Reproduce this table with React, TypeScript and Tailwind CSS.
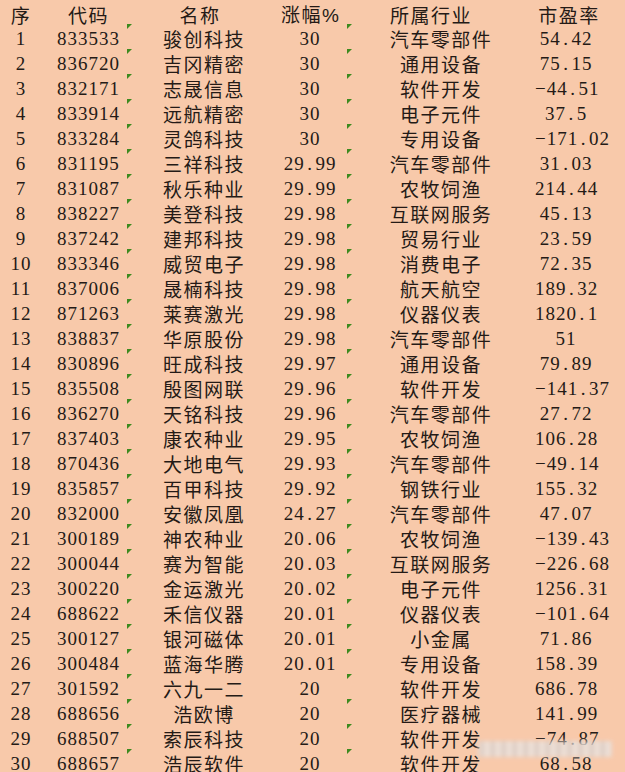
const rows: [string, string, string, string, string, string][] = [
  ['1', '833533', '骏创科技', '30', '汽车零部件', '54.42'],
  ['2', '836720', '吉冈精密', '30', '通用设备', '75.15'],
  ['3', '832171', '志晟信息', '30', '软件开发', '-44.51'],
  ['4', '833914', '远航精密', '30', '电子元件', '37.5'],
  ['5', '833284', '灵鸽科技', '30', '专用设备', '-171.02'],
  ['6', '831195', '三祥科技', '29.99', '汽车零部件', '31.03'],
  ['7', '831087', '秋乐种业', '29.99', '农牧饲渔', '214.44'],
  ['8', '838227', '美登科技', '29.98', '互联网服务', '45.13'],
  ['9', '837242', '建邦科技', '29.98', '贸易行业', '23.59'],
  ['10', '833346', '威贸电子', '29.98', '消费电子', '72.35'],
  ['11', '837006', '晟楠科技', '29.98', '航天航空', '189.32'],
  ['12', '871263', '莱赛激光', '29.98', '仪器仪表', '1820.1'],
  ['13', '838837', '华原股份', '29.98', '汽车零部件', '51'],
  ['14', '830896', '旺成科技', '29.97', '通用设备', '79.89'],
  ['15', '835508', '殷图网联', '29.96', '软件开发', '-141.37'],
  ['16', '836270', '天铭科技', '29.96', '汽车零部件', '27.72'],
  ['17', '837403', '康农种业', '29.95', '农牧饲渔', '106.28'],
  ['18', '870436', '大地电气', '29.93', '汽车零部件', '-49.14'],
  ['19', '835857', '百甲科技', '29.92', '钢铁行业', '155.32'],
  ['20', '832000', '安徽凤凰', '24.27', '汽车零部件', '47.07'],
  ['21', '300189', '神农种业', '20.06', '农牧饲渔', '-139.43'],
  ['22', '300044', '赛为智能', '20.03', '互联网服务', '-226.68'],
  ['23', '300220', '金运激光', '20.02', '电子元件', '1256.31'],
  ['24', '688622', '禾信仪器', '20.01', '仪器仪表', '-101.64'],
  ['25', '300127', '银河磁体', '20.01', '小金属', '71.86'],
  ['26', '300484', '蓝海华腾', '20.01', '专用设备', '158.39'],
  ['27', '301592', '六九一二', '20', '软件开发', '686.78'],
  ['28', '688656', '浩欧博', '20', '医疗器械', '141.99'],
  ['29', '688507', '索辰科技', '20', '软件开发', '-74.87'],
  ['30', '688657', '浩辰软件', '20', '软件开发', '68.58'],
];

const cols = 'grid grid-cols-[42px_93px_138px_74px_188px_90px]';
const num = "font-['Liberation_Serif',serif] text-[19px] tracking-[1px]";
const cjk = "font-['Noto_Sans_CJK_SC',sans-serif] text-[19px] tracking-[1.5px]";

// SimSun-like number: wide dot and wide minus
function Num({ v }: { v: string }) {
  const neg = v.startsWith('-');
  const [a, b] = (neg ? v.slice(1) : v).split('.');
  return (
    <>
      {neg && '\u2212'}
      {a}
      {b !== undefined && <span className="px-[2.5px]">.</span>}
      {b}
    </>
  );
}

function Marker({ left }: { left: string }) {
  return (
    <span
      className={`absolute top-[-1px] ${left} h-0 w-0 border-t-[5px] border-r-[5px] border-t-[#3d8a1e] border-r-transparent`}
    />
  );
}

export default function App() {
  return (
    <div className="relative h-[772px] w-[625px] overflow-hidden bg-[#f8c9aa] text-[#241a16]">
      <div className={`${cols} h-[25px] items-center`}>
        <div className={`${cjk} text-center`}>序</div>
        <div className={`${cjk} text-center`}>代码</div>
        <div className={`${cjk} pr-2 text-center`}>名称</div>
        <div className={`${cjk} text-center`}>
          涨幅<span className="font-['Liberation_Sans',sans-serif] tracking-normal">%</span>
        </div>
        <div className={`${cjk} pr-[20px] text-center`}>所属行业</div>
        <div className={`${cjk} pr-[22px] text-center`}>市盈率</div>
      </div>

      {rows.map((r) => (
        <div key={r[0]} className={`${cols} relative h-[25px] items-center whitespace-nowrap`}>
          <Marker left="left-[127px]" />
          <Marker left="left-[347px]" />
          <div className={`${num} text-center`}>{r[0]}</div>
          <div className={`${num} text-center`}>{r[1]}</div>
          <div className={`${cjk} text-center`}>{r[2]}</div>
          <div className={`${num} text-center`}>
            <Num v={r[3]} />
          </div>
          <div className={`${cjk} text-center`}>{r[4]}</div>
          <div className={`${num} pr-[28px] text-center`}>
            <Num v={r[5]} />
          </div>
        </div>
      ))}

      {/* blurred watermark */}
      <div className="absolute left-[478px] top-[741px] h-[16px] w-[134px] bg-[repeating-linear-gradient(90deg,#f1ebe8_0px,#cfc6c2_4px,#f3eeeb_8px,#ddd5d1_11px)] opacity-80 blur-[2px]" />
    </div>
  );
}
